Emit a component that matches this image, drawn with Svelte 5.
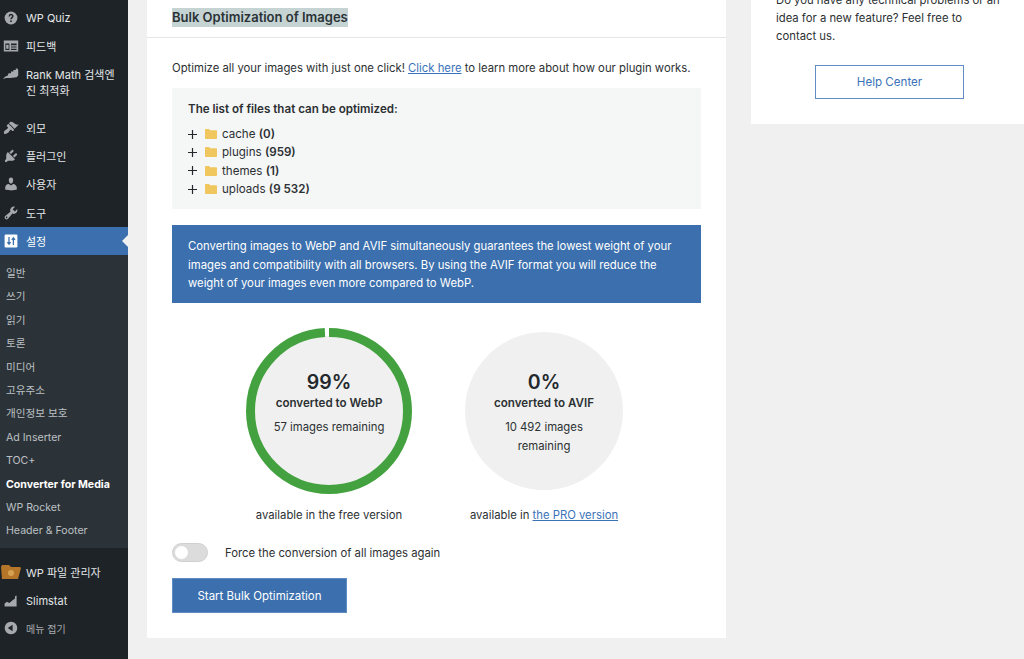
<script>
	const submenu = [
		'일반', '쓰기', '읽기', '토론', '미디어', '고유주소', '개인정보 보호',
		'Ad Inserter', 'TOC+', 'Converter for Media', 'WP Rocket', 'Header & Footer'
	];
	const folders = [
		{ name: 'cache', count: '(0)' },
		{ name: 'plugins', count: '(959)' },
		{ name: 'themes', count: '(1)' },
		{ name: 'uploads', count: '(9 532)' }
	];
	// 99% ring, r = 78.5
	const circumference = 2 * Math.PI * 78.5;
	const dash = circumference * 0.99;
</script>

<div class="page">
	<nav class="sidebar">
		<ul class="menu">
			<li class="item">
				<svg class="icon" viewBox="0 0 20 20"><circle cx="10" cy="10" r="8" fill="#a7aaad" /><path d="M7.8 8c0-3 4.500-3 4.500-.2 0 1.800-2.300 1.700-2.300 3.700" fill="none" stroke="#1d2327" stroke-width="1.800" /><circle cx="10" cy="14" r="1.100" fill="#1d2327" /></svg>
				<span>WP Quiz</span>
			</li>
			<li class="item">
				<svg class="icon" viewBox="0 0 20 20"><path fill="#a7aaad" fill-rule="evenodd" d="M1 3h18v14H1zM3 7v8h5V7zm7 0v2h7V7zm0 3.500v1.500h7v-1.500zm0 3v1.500h7v-1.500z" /><rect x="4" y="8.500" width="3" height="5" fill="#a7aaad" /></svg>
				<span>피드백</span>
			</li>
			<li class="item tall">
				<svg class="icon" viewBox="0 0 20 20"><path fill="#a7aaad" d="M0 16l3-3 3-1 1-3h3V7h3V5h3V3h2l1 2v7l-2 2-8 1-5 0-3 1z" /></svg>
				<span>Rank Math 검색엔<br />진 최적화</span>
			</li>
			<li class="item">
				<svg class="icon" viewBox="0 0 20 20"><path fill="#a7aaad" d="M14.480 11.060L7.410 3.990l1.500-1.500c.5-.56 2.300-.47 3.510.32 1.210.8 1.430 1.280 2.910 2.100 1.180.64 2.450 1.260 4.450.85zm-.71.71L6.700 4.700 4.930 6.470c-.39.39-.39 1.020 0 1.410l1.060 1.060c.39.39.39 1.030 0 1.420-.6.6-1.430 1.110-2.210 1.690-.35.26-.7.53-1.010.84C1.430 13.230.78 15.780 1.400 17.150c1.360.6 3.900-.05 5.230-1.370.31-.31.58-.66.85-1.020.57-.78 1.080-1.610 1.690-2.210.39-.39 1.020-.39 1.410 0l1.060 1.060c.39.39 1.020.39 1.410 0z" /></svg>
				<span>외모</span>
			</li>
			<li class="item">
				<svg class="icon" viewBox="0 0 20 20"><path fill="#a7aaad" d="M13.110 4.360L9.870 7.600 8 5.730l3.240-3.240c.35-.34 1.050-.2 1.560.32.52.51.66 1.210.31 1.550zm-8 1.770l.91-1.120 9.010 9.010-1.190.84c-.71.71-2.630 1.160-3.820 1.160H6.140L4.900 17.260c-.59.59-1.540.59-2.120 0-.59-.58-.59-1.530 0-2.120l1.240-1.240v-3.880c0-1.130.4-3.190 1.090-3.890zm7.260 3.970l3.240-3.240c.34-.35 1.040-.21 1.550.31.52.51.66 1.210.31 1.550l-3.240 3.250z" /></svg>
				<span>플러그인</span>
			</li>
			<li class="item">
				<svg class="icon" viewBox="0 0 20 20"><path fill="#a7aaad" d="M10 9.250c-2.270 0-2.730-3.440-2.730-3.440C7 4.020 7.820 2 9.970 2c2.160 0 2.980 2.020 2.710 3.810 0 0-.41 3.440-2.680 3.440zm0 2.570L12.720 10c2.390 0 4.520 2.330 4.520 4.530v2.490s-3.650 1.130-7.240 1.130c-3.650 0-7.240-1.130-7.240-1.130v-2.490c0-2.250 1.940-4.480 4.470-4.480z" /></svg>
				<span>사용자</span>
			</li>
			<li class="item">
				<svg class="icon" viewBox="0 0 20 20"><path fill="#a7aaad" d="M16.680 9.770c-1.340 1.340-3.300 1.670-4.950.99l-5.410 6.520c-.99.99-2.590.99-3.580 0s-.99-2.590 0-3.570l6.520-5.420c-.68-1.650-.35-3.610.99-4.950 1.280-1.280 3.120-1.620 4.720-1.060l-2.890 2.890 2.820 2.820 2.860-2.870c.53 1.580.18 3.390-1.080 4.650zM3.810 16.210c.4.39 1.040.39 1.430 0 .4-.4.4-1.040 0-1.430-.39-.4-1.030-.4-1.430 0-.39.39-.39 1.030 0 1.430z" /></svg>
				<span>도구</span>
			</li>
			<li class="item current">
				<svg class="icon" viewBox="0 0 20 20"><rect x="2" y="2" width="16" height="16" rx="1.500" fill="#fff" /><path d="M7.500 5v9M5.500 11.500l2 2.500 2-2.500M13 15V6M11 8.500L13 6l2 2.500" fill="none" stroke="#3b6fae" stroke-width="1.600" /></svg>
				<span>설정</span>
			</li>
		</ul>
		<ul class="sub">
			{#each submenu as label}
				<li class:active={label === 'Converter for Media'}>{label}</li>
			{/each}
		</ul>
		<ul class="menu lower">
			<li class="item">
				<svg class="icon wide" viewBox="0 0 20 16"><path fill="#b5762a" d="M0 3l1-2h7l2 2h9l1 1-3 11H1z" /><circle cx="10" cy="9" r="3" fill="#d6a24f" /></svg>
				<span>WP 파일 관리자</span>
			</li>
			<li class="item">
				<svg class="icon" viewBox="0 0 20 20"><path fill="#a7aaad" d="M2 17v-4l3-2 3 1.500L12 9l3-2V4l2-1v14z" /></svg>
				<span>Slimstat</span>
			</li>
			<li class="item collapse">
				<svg class="icon" viewBox="0 0 20 20"><path fill="#a7aaad" fill-rule="evenodd" d="M10 2.200c4.300 0 7.800 3.500 7.800 7.800s-3.500 7.800-7.800 7.800S2.200 14.300 2.200 10 5.700 2.200 10 2.200zM12 6l-6 4 6 4z" /></svg>
				<span>메뉴 접기</span>
			</li>
		</ul>
	</nav>

	<main class="card">
		<header class="card-head">
			<h2><span class="selected">Bulk Optimization of Images</span></h2>
		</header>
		<div class="card-body">
			<p class="intro">Optimize all your images with just one click! <a href="#help">Click here</a> to learn more about how our plugin works.</p>

			<section class="files">
				<h3>The list of files that can be optimized:</h3>
				<ul>
					{#each folders as folder}
						<li>
							<svg class="plus" viewBox="0 0 9 9"><path d="M4.500 0v9M0 4.500h9" stroke="#23282d" stroke-width="1.200" /></svg>
							<svg class="folder" viewBox="0 0 12 10"><path fill="#f0c75e" d="M0 1c0-.5.4-1 1-1h3l1 1.200h6c.6 0 1 .4 1 1V9c0 .6-.4 1-1 1H1c-.6 0-1-.4-1-1z" /></svg>
							<span>{folder.name} <b>{folder.count}</b></span>
						</li>
					{/each}
				</ul>
			</section>

			<p class="notice">Converting images to WebP and AVIF simultaneously guarantees the lowest weight of your images and compatibility with all browsers. By using the AVIF format you will reduce the weight of your images even more compared to WebP.</p>

			<div class="stats">
				<div class="stat">
					<div class="circle big">
						<svg class="ring" viewBox="0 0 166 166">
							<circle cx="83" cy="83" r="78.500" fill="none" stroke="#43a23f" stroke-width="9" stroke-dasharray="{dash} {circumference}" transform="rotate(-90 83 83)" />
						</svg>
						<strong>99%</strong>
						<b>converted to WebP</b>
						<span>57 images remaining</span>
					</div>
					<p>available in the free version</p>
				</div>
				<div class="stat">
					<div class="circle">
						<strong>0%</strong>
						<b>converted to AVIF</b>
						<span>10 492 images<br />remaining</span>
					</div>
					<p>available in <a href="#pro">the PRO version</a></p>
				</div>
			</div>

			<div class="force">
				<span class="toggle"><i></i></span>
				<span>Force the conversion of all images again</span>
			</div>

			<button class="start">Start Bulk Optimization</button>
		</div>
	</main>

	<aside class="help">
		<p>Do you have any technical problems or an idea for a new feature? Feel free to contact us.</p>
		<a class="help-btn" href="#center">Help Center</a>
	</aside>
</div>

<style>
	:global(body) {
		background: #f0f0f0;
		overflow: hidden;
	}

	.page {
		display: flex;
		align-items: flex-start;
		height: 659px;
		overflow: hidden;
		font-family: Inter, 'Noto Sans CJK KR', sans-serif;
		font-size: 11.300px;
		color: #2c3033;
	}

	ul {
		list-style: none;
		margin: 0;
		padding: 0;
	}

	p {
		margin: 0;
	}

	a {
		color: #3b73b9;
	}

	/* sidebar */
	.sidebar {
		flex: none;
		width: 128px;
		height: 659px;
		padding-top: 4px;
		box-sizing: border-box;
		background: #1d2327;
		font-size: 11px;
		color: #e4e6e8;
	}

	.item {
		position: relative;
		display: flex;
		align-items: center;
		gap: 7px;
		height: 28.300px;
		padding-left: 3px;
		box-sizing: border-box;
	}

	.item.tall {
		align-items: flex-start;
		height: 53px;
		padding-top: 6px;
		line-height: 16px;
	}

	.item.tall .icon {
		margin-top: -1px;
	}

	.icon {
		flex: none;
		width: 16px;
		height: 16px;
	}

	.icon.wide {
		width: 20px;
		margin: 0 -2px 0 -2px;
	}

	.current {
		background: #3b6fae;
		color: #fff;
	}

	.current::after {
		content: '';
		position: absolute;
		right: 0;
		top: 8px;
		border: 6px solid transparent;
		border-right-color: #f0f0f0;
		border-left-width: 0;
	}

	.sub {
		padding: 7px 0 5.500px;
		background: #2c3338;
		color: #bcc0c4;
		font-size: 10.600px;
	}

	.sub li {
		height: 23.400px;
		line-height: 23.400px;
		padding-left: 6px;
	}

	.sub li.active {
		color: #fff;
		font-weight: 700;
	}

	.lower {
		padding-top: 9px;
	}

	.lower .item {
		height: 29px;
	}

	.lower .item.collapse {
		height: 26px;
		color: #a7aaad;
		font-size: 10px;
	}

	/* main card */
	.card {
		flex: none;
		width: 579px;
		margin-left: 19px;
		background: #fff;
	}

	.card-head {
		display: flex;
		align-items: center;
		height: 34px;
		padding: 0 0 3px 25px;
		border-bottom: 1px solid #e3e5e6;
	}

	h2 {
		margin: 0;
		font-size: 13px;
		font-weight: 600;
		line-height: 19px;
	}

	.selected {
		display: inline-block;
		background: #c5d3d3;
		color: #2a3236;
	}

	.card-body {
		padding: 21px 25px 25px;
	}

	.intro {
		line-height: 18px;
		margin-bottom: 11px;
	}

	.files {
		padding: 12px 16px 11px;
		background: #f5f6f6;
	}

	h3 {
		margin: 0 0 7px;
		font-size: 11.600px;
		font-weight: 600;
		line-height: 18px;
	}

	.files li {
		display: flex;
		align-items: center;
		height: 18.300px;
		font-size: 11.600px;
	}

	.files b {
		font-weight: 600;
	}

	.plus {
		width: 9px;
		height: 9px;
		margin-right: 8px;
	}

	.folder {
		width: 12px;
		height: 10px;
		margin-right: 5px;
	}

	.notice {
		margin: 16px 0 0;
		padding: 12px 16px 10.500px;
		background: #3b6fae;
		color: #fff;
		line-height: 18.500px;
	}

	.stats {
		display: flex;
		justify-content: center;
		margin-top: 25px;
	}

	.stat {
		display: flex;
		flex-direction: column;
		width: 215px;
		text-align: center;
	}

	.stat p {
		margin-top: 12px;
		line-height: 18px;
	}

	.circle {
		display: flex;
		flex-direction: column;
		align-items: center;
		box-sizing: border-box;
		width: 158px;
		height: 158px;
		margin: 4px auto;
		padding-top: 37px;
		border-radius: 50%;
		background: #f0f0f0;
	}

	.circle.big {
		position: relative;
		width: 166px;
		height: 166px;
		margin: 0 auto;
		padding-top: 41px;
		background: radial-gradient(circle, #f0f0f0 75px, transparent 75px);
	}

	.ring {
		position: absolute;
		inset: 0;
		width: 166px;
		height: 166px;
	}

	.circle strong {
		font-size: 19.500px;
		font-weight: 600;
		line-height: 26px;
		color: #23282d;
	}

	.circle b {
		font-size: 11.600px;
		font-weight: 600;
		line-height: 16px;
	}

	.circle span {
		margin-top: 7px;
		line-height: 19px;
	}

	.force {
		display: flex;
		align-items: center;
		gap: 17px;
		margin-top: 19px;
	}

	.toggle {
		display: block;
		width: 36px;
		height: 19px;
		box-sizing: border-box;
		padding: 2px;
		border: 1px solid #d0d0d0;
		border-radius: 10px;
		background: #dcdcdc;
	}

	.toggle i {
		display: block;
		width: 13px;
		height: 13px;
		border-radius: 50%;
		background: #fff;
	}

	.start {
		display: block;
		width: 175px;
		height: 35px;
		margin-top: 16px;
		border: 1px solid #5f8cc4;
		background: #3b6fae;
		color: #fff;
		font-family: inherit;
		font-size: 11.500px;
	}

	/* help card */
	.help {
		flex: 1;
		margin-left: 25px;
		margin-top: -9px;
		padding: 0 25px 25px;
		background: #fff;
		line-height: 18px;
		font-size: 11.300px;
	}

	.help p {
		width: 226px;
	}

	.help-btn {
		display: block;
		width: 149px;
		height: 34px;
		margin: 20px 0 0 39px;
		box-sizing: border-box;
		border: 1px solid #5f8cc4;
		font-size: 11.600px;
		text-align: center;
		line-height: 33px;
		text-decoration: none;
	}
</style>
